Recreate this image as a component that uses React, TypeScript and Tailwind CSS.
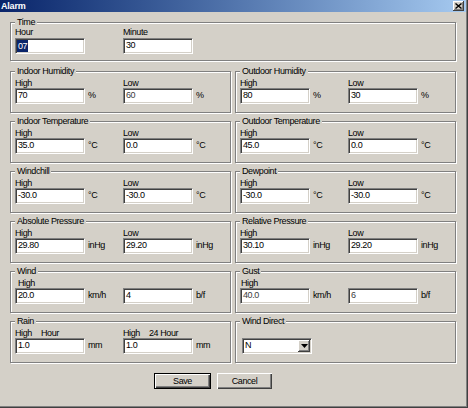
import type { ReactNode } from "react";

const sunken =
  "border border-t-[#808080] border-l-[#808080] border-r-white border-b-white bg-white shadow-[inset_1px_1px_0_#404040,inset_-1px_-1px_0_#d4d0c8]";

type EntryProps = {
  label?: ReactNode;
  value: string;
  unit?: string;
  muted?: boolean;
  selected?: boolean;
  labelClass?: string;
  rowClass?: string;
};

function Entry({ label, value, unit, muted, selected, labelClass = "", rowClass = "" }: EntryProps) {
  return (
    <div>
      <div className={`h-[10px] whitespace-pre leading-[10px] ${labelClass}`}>{label}</div>
      <div className={`flex h-[16px] items-center ${rowClass}`}>
        <div className={`flex h-[16px] w-[70px] items-center pl-[2px] ${sunken}`}>
          {selected ? (
            <span className="-ml-[1px] bg-[#0a246a] px-[1px] leading-[12px] text-white">{value}</span>
          ) : (
            <span className={muted ? "text-[#3c3c3c]" : ""}>{value}</span>
          )}
        </div>
        {unit && <span className="ml-[3px]">{unit}</span>}
      </div>
    </div>
  );
}

function Group({ title, children, compact }: { title: string; children: ReactNode; compact?: boolean }) {
  return (
    <fieldset
      className={`min-w-0 border border-[#808080] pl-[4px] shadow-[inset_1px_1px_0_#fff,1px_1px_0_#fff] ${
        compact ? "pb-[6px]" : "pt-[2px] pb-[8px]"
      }`}
    >
      <legend className="bg-[#d4d0c8] px-[2px] leading-[10px]">{title}</legend>
      <div className="grid grid-cols-[108px_1fr]">{children}</div>
    </fieldset>
  );
}

export default function App() {
  return (
    <div className="flex h-[408px] w-[468px] flex-col bg-[#d4d0c8] font-['Liberation_Sans',Arial,sans-serif] text-[9px] tracking-[-0.4px] text-black shadow-[inset_-1px_-1px_0_#404040,inset_-2px_-2px_0_#808080]">
      <div className="flex h-[12px] w-[466px] items-center justify-between bg-linear-to-r from-[#0a246a] to-[#a6caf0] pl-[1px] pr-[2px]">
        <span className="font-bold leading-[12px] tracking-[-0.2px] text-white">Alarm</span>
        <div className="flex h-[10px] w-[11px] items-center justify-center bg-[#d4d0c8] shadow-[inset_-1px_-1px_0_#404040,inset_1px_1px_0_#fff,inset_-2px_-2px_0_#808080]">
          <svg width="7" height="6" viewBox="0 0 7 6">
            <path d="M0.5 0.5 L6.5 5.5 M6.5 0.5 L0.5 5.5" stroke="#000" strokeWidth="1.4" />
          </svg>
        </div>
      </div>

      <div className="w-[456px] pl-[10px] pt-[5px]">
        <Group title="Time" compact>
          <Entry label="Hour" value="07" selected rowClass="mt-[1px]" />
          <Entry label="Minute" value="30" rowClass="mt-[1px]" />
        </Group>

        <div className="mt-[5px] grid grid-cols-[221px_221px] gap-x-[4px] gap-y-[3px]">
          <Group title="Indoor Humidity">
            <Entry label="High" value="70" unit="%" />
            <Entry label="Low" value="60" unit="%" muted />
          </Group>
          <Group title="Outdoor Humidity">
            <Entry label="High" value="80" unit="%" />
            <Entry label="Low" value="30" unit="%" />
          </Group>

          <Group title="Indoor Temperature">
            <Entry label="High" value="35.0" unit="°C" />
            <Entry label="Low" value="0.0" unit="°C" />
          </Group>
          <Group title="Outdoor Temperature">
            <Entry label="High" value="45.0" unit="°C" />
            <Entry label="Low" value="0.0" unit="°C" />
          </Group>

          <Group title="Windchill">
            <Entry label="High" value="-30.0" unit="°C" />
            <Entry label="Low" value="-30.0" unit="°C" />
          </Group>
          <Group title="Dewpoint">
            <Entry label="High" value="-30.0" unit="°C" />
            <Entry label="Low" value="-30.0" unit="°C" />
          </Group>

          <Group title="Absolute Pressure">
            <Entry label="High" value="29.80" unit="inHg" />
            <Entry label="Low" value="29.20" unit="inHg" />
          </Group>
          <Group title="Relative Pressure">
            <Entry label="High" value="30.10" unit="inHg" />
            <Entry label="Low" value="29.20" unit="inHg" />
          </Group>

          <Group title="Wind">
            <Entry label="High" labelClass="ml-[3px]" value="20.0" unit="km/h" />
            <Entry value="4" unit="b/f" />
          </Group>
          <Group title="Gust">
            <Entry label="High" labelClass="ml-[1px]" value="40.0" unit="km/h" muted />
            <Entry value="6" unit="b/f" muted />
          </Group>

          <Group title="Rain">
            <Entry
              label={
                <>
                  <span>High</span>
                  <span className="ml-[9px]">Hour</span>
                </>
              }
              value="1.0"
              unit="mm"
            />
            <Entry
              label={
                <>
                  <span>High</span>
                  <span className="ml-[9px]">24 Hour</span>
                </>
              }
              value="1.0"
              unit="mm"
            />
          </Group>
          <Group title="Wind Direct">
            <div>
              <div className="h-[10px]" />
              <div className={`ml-[2px] flex h-[16px] w-[70px] items-center ${sunken}`}>
                <span className="flex-1 pl-[2px]">N</span>
                <div className="mr-[1px] flex h-[12px] w-[12px] items-center justify-center bg-[#d4d0c8] shadow-[inset_-1px_-1px_0_#404040,inset_1px_1px_0_#fff,inset_-2px_-2px_0_#808080]">
                  <svg width="7" height="4" viewBox="0 0 7 4">
                    <path d="M0 0 H7 L3.5 4 Z" fill="#000" />
                  </svg>
                </div>
              </div>
            </div>
          </Group>
        </div>

        <div className="ml-[144px] mt-[10px] flex gap-[6px]">
          <button className="h-[16px] w-[57px] border border-black bg-[#d4d0c8] leading-[14px] shadow-[inset_1px_1px_0_#fff,inset_-1px_-1px_0_#404040,inset_-2px_-2px_0_#808080]">
            Save
          </button>
          <button className="h-[16px] w-[55px] bg-[#d4d0c8] leading-[16px] shadow-[inset_1px_1px_0_#fff,inset_-1px_-1px_0_#404040,inset_-2px_-2px_0_#808080]">
            Cancel
          </button>
        </div>
      </div>
    </div>
  );
}
